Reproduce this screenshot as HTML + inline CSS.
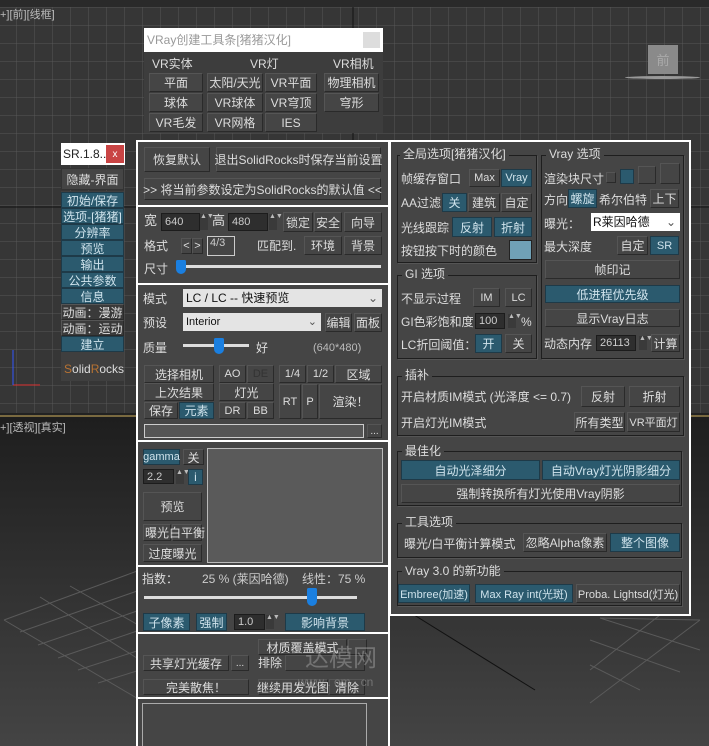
<!DOCTYPE html>
<html><head><meta charset="utf-8"><style>
*{margin:0;padding:0;box-sizing:border-box}
body{width:709px;height:746px;overflow:hidden;position:relative;background:#363636;font-family:"Liberation Sans","Noto Sans CJK SC",sans-serif;font-size:12px;color:#ddd}
div,span{position:absolute}
.b{background:#454545;border:1px solid #2a2a2a;border-top-color:#555;border-left-color:#555;display:flex;align-items:center;justify-content:center;white-space:nowrap;color:#ddd;font-size:12px}
.t{background:#2b5a6e;border:1px solid #1e3a48;display:flex;align-items:center;justify-content:center;white-space:nowrap;color:#cfe3ec;font-size:12px}
.l{white-space:nowrap;font-size:12px;color:#ddd;line-height:14px}
.in{background:#2e2e2e;border:1px solid #1c1c1c;color:#ccc;font-size:11px;padding-left:3px;display:flex;align-items:center}
.g{border:1px solid #1e1e1e;box-shadow:1px 1px 0 #555}
.gt{background:#454545;padding:0 3px;font-size:12px;color:#ddd;line-height:13px;white-space:nowrap}
.wl{background:#fff;height:2px}
.sp{background:#3a3a3a;color:#bbb;font-size:7px;line-height:6px;text-align:center;width:8px}
</style></head><body>
<!-- top viewport grid -->
<svg width="709" height="746" style="position:absolute;left:0;top:0">
<defs><linearGradient id="pg" x1="0" y1="0" x2="0" y2="1"><stop offset="0" stop-color="#1e1e1e"/><stop offset="1" stop-color="#444"/></linearGradient>
<pattern id="gr" x="-2" y="7" width="18" height="18" patternUnits="userSpaceOnUse"><path d="M0 0H18M0 0V18" stroke="#575757" stroke-width="1" fill="none"/></pattern></defs>
<rect x="0" y="0" width="709" height="7" fill="#2a2a2a"/>
<rect x="0" y="7" width="709" height="408" fill="url(#gr)"/>
<line x1="353" y1="7" x2="353" y2="415" stroke="#111" stroke-width="1"/>
<line x1="0" y1="207" x2="709" y2="207" stroke="#111" stroke-width="1"/>
<rect x="0" y="413" width="709" height="2" fill="#222"/>
<rect x="0" y="415" width="709" height="2" fill="#7a6a40"/>
<rect x="0" y="417" width="709" height="329" fill="url(#pg)"/>
<g stroke="#5a5a5a" stroke-width="1" fill="none">
<path d="M4 620 L140 570 M20 632 L140 590 M38 645 L140 610 M58 658 L140 630 M78 670 L140 650 M98 683 L140 670 M4 620 L140 700 M40 597 L140 660 M70 586 L140 626"/>
<path d="M600 618 L700 650 M590 640 L680 672 M590 665 L640 690 M600 618 L700 620 M660 615 L590 670 M700 620 L590 703"/>
<line x1="390" y1="600" x2="535" y2="690" stroke="#111"/>
</g>
<g stroke="#d33" stroke-width="1"><line x1="13" y1="385" x2="40" y2="385"/></g>
<line x1="13" y1="350" x2="13" y2="385" stroke="#35f"/>
</svg>
<div class="l" style="left:0;top:8;color:#bbb;top:8px;font-size:11px">+][前][线框]</div>
<div class="l" style="left:0;top:421px;color:#bbb;font-size:11px">+][透视][真实]</div>
<div style="left:648px;top:45px;width:30px;height:29px;background:#8a8a8a;color:#aaa;font-size:13px;display:flex;align-items:center;justify-content:center">前</div>
<div style="left:625px;top:76px;width:75px;height:3px;border-radius:50%;background:#999"></div>

<!-- VRay toolbar -->
<div style="left:144px;top:28px;width:239px;height:105px;background:#3d3d3d"></div>
<div style="left:144px;top:28px;width:239px;height:24px;background:#fff"></div>
<div class="l" style="left:147px;top:33px;color:#999">VRay创建工具条[猪猪汉化]</div>
<div style="left:363px;top:32px;width:17px;height:16px;background:#ddd"></div>
<div class="l" style="left:152px;top:57px">VR实体</div>
<div class="l" style="left:250px;top:57px">VR灯</div>
<div class="l" style="left:333px;top:57px">VR相机</div>
<div class="b" style="left:149px;top:73px;width:54px;height:19px">平面</div>
<div class="b" style="left:207px;top:73px;width:56px;height:19px">太阳/天光</div>
<div class="b" style="left:265px;top:73px;width:52px;height:19px">VR平面</div>
<div class="b" style="left:324px;top:73px;width:55px;height:19px">物理相机</div>
<div class="b" style="left:149px;top:93px;width:54px;height:19px">球体</div>
<div class="b" style="left:207px;top:93px;width:56px;height:19px">VR球体</div>
<div class="b" style="left:265px;top:93px;width:52px;height:19px">VR穹顶</div>
<div class="b" style="left:324px;top:93px;width:55px;height:19px">穹形</div>
<div class="b" style="left:149px;top:113px;width:54px;height:19px">VR毛发</div>
<div class="b" style="left:207px;top:113px;width:56px;height:19px">VR网格</div>
<div class="b" style="left:265px;top:113px;width:52px;height:19px">IES</div>

<!-- SR small panel -->
<div style="left:61px;top:143px;width:64px;height:22px;background:#fff"></div>
<div class="l" style="left:63px;top:147px;color:#222">SR.1.8...</div>
<div style="left:106px;top:145px;width:18px;height:18px;background:#c94444;color:#fff;font-size:10px;display:flex;align-items:center;justify-content:center">x</div>
<div class="b" style="left:61px;top:168px;width:63px;height:22px;border-color:#333">隐藏-界面</div>
<div style="left:61px;top:191px;width:63px;height:190px;background:#3f3f3f"></div>
<div class="t" style="left:61px;top:192px;width:63px;height:16px">初始/保存</div>
<div class="t" style="left:61px;top:208px;width:63px;height:16px">选项-[猪猪]</div>
<div class="t" style="left:61px;top:224px;width:63px;height:16px">分辨率</div>
<div class="t" style="left:61px;top:240px;width:63px;height:16px">预览</div>
<div class="t" style="left:61px;top:256px;width:63px;height:16px">输出</div>
<div class="t" style="left:61px;top:272px;width:63px;height:16px">公共参数</div>
<div class="t" style="left:61px;top:288px;width:63px;height:16px">信息</div>
<div class="b" style="left:61px;top:304px;width:63px;height:16px;background:#3a3a3a">动画：漫游</div>
<div class="b" style="left:61px;top:320px;width:63px;height:16px;background:#3a3a3a">动画：运动</div>
<div class="t" style="left:61px;top:336px;width:63px;height:16px">建立</div>
<div class="l" style="left:64px;top:362px;color:#ddd"><span style="position:static;color:#b87333">S</span>olid<span style="position:static;color:#b87333">R</span>ocks</div>

<!-- main left panel -->
<div style="left:136px;top:140px;width:254px;height:606px;background:#fff"></div>
<div style="left:138px;top:142px;width:250px;height:604px;background:#454545"></div>
<div class="wl" style="left:138px;top:205px;width:250px"></div>
<div class="wl" style="left:138px;top:283px;width:250px"></div>
<div class="wl" style="left:138px;top:440px;width:250px"></div>
<div class="wl" style="left:138px;top:565px;width:250px"></div>
<div class="wl" style="left:138px;top:632px;width:250px"></div>
<div class="wl" style="left:138px;top:697px;width:250px"></div>

<div class="b" style="left:144px;top:147px;width:66px;height:25px">恢复默认</div>
<div class="b" style="left:216px;top:147px;width:165px;height:25px">退出SolidRocks时保存当前设置</div>
<div class="b" style="left:144px;top:178px;width:237px;height:22px">&gt;&gt; 将当前参数设定为SolidRocks的默认值 &lt;&lt;</div>

<div class="l" style="left:144px;top:214px;font-size:13px">宽</div>
<div class="in" style="left:161px;top:213px;width:39px;height:18px">640</div>
<div class="sp" style="left:200px;top:214px;height:16px">▲▼</div>
<div class="l" style="left:212px;top:214px;font-size:13px">高</div>
<div class="in" style="left:228px;top:213px;width:40px;height:18px">480</div>
<div class="sp" style="left:269px;top:214px;height:16px">▲▼</div>
<div class="b" style="left:283px;top:212px;width:30px;height:20px">锁定</div>
<div class="b" style="left:314px;top:212px;width:28px;height:20px">安全</div>
<div class="b" style="left:344px;top:212px;width:38px;height:20px">向导</div>
<div class="l" style="left:144px;top:239px">格式</div>
<div class="b" style="left:181px;top:238px;width:11px;height:16px;font-size:11px">&lt;</div>
<div class="b" style="left:192px;top:238px;width:11px;height:16px;font-size:11px">&gt;</div>
<div style="left:207px;top:236px;width:28px;height:20px;border:1px solid #ccc;font-size:11px;padding-left:2px;color:#ccc">4/3</div>
<div class="l" style="left:257px;top:239px">匹配到.</div>
<div class="b" style="left:304px;top:236px;width:38px;height:19px">环境</div>
<div class="b" style="left:344px;top:236px;width:38px;height:19px">背景</div>
<div class="l" style="left:144px;top:262px">尺寸</div>
<div style="left:176px;top:265px;width:205px;height:3px;background:#ddd"></div>
<div style="left:176px;top:260px;width:10px;height:14px;background:#1a7fe0;border-radius:2px 2px 6px 6px"></div>

<div class="l" style="left:143px;top:292px">模式</div>
<div style="left:183px;top:289px;width:199px;height:18px;background:#e4e4e4;color:#111;font-size:12px;padding-left:3px;line-height:18px">LC / LC -- 快速预览<span style="right:4px;top:0;color:#555">⌄</span></div>
<div class="l" style="left:143px;top:316px">预设</div>
<div style="left:183px;top:313px;width:138px;height:18px;background:#e4e4e4;color:#111;font-size:11px;padding-left:3px;line-height:18px">Interior<span style="right:4px;top:0;color:#555">⌄</span></div>
<div class="b" style="left:325px;top:313px;width:27px;height:19px">编辑</div>
<div class="b" style="left:354px;top:313px;width:28px;height:19px">面板</div>
<div class="l" style="left:143px;top:341px">质量</div>
<div style="left:183px;top:344px;width:66px;height:3px;background:#ddd"></div>
<div style="left:214px;top:338px;width:10px;height:16px;background:#1a7fe0;border-radius:2px 2px 6px 6px"></div>
<div class="l" style="left:256px;top:341px">好</div>
<div class="l" style="left:313px;top:341px;color:#bbb;font-size:11px">(640*480)</div>

<div class="b" style="left:144px;top:365px;width:70px;height:18px">选择相机</div>
<div class="b" style="left:219px;top:365px;width:27px;height:18px;font-size:11px">AO</div>
<div class="b" style="left:247px;top:365px;width:27px;height:18px;font-size:11px;color:#333">DE</div>
<div class="b" style="left:279px;top:365px;width:27px;height:18px;font-size:11px">1/4</div>
<div class="b" style="left:307px;top:365px;width:27px;height:18px;font-size:11px">1/2</div>
<div class="b" style="left:335px;top:365px;width:47px;height:18px">区域</div>
<div class="b" style="left:144px;top:383px;width:70px;height:18px">上次结果</div>
<div class="b" style="left:219px;top:383px;width:55px;height:18px">灯光</div>
<div class="b" style="left:279px;top:384px;width:22px;height:35px;font-size:11px">RT</div>
<div class="b" style="left:302px;top:384px;width:16px;height:35px;font-size:11px">P</div>
<div class="b" style="left:319px;top:384px;width:63px;height:35px">渲染！</div>
<div class="b" style="left:144px;top:402px;width:34px;height:17px">保存</div>
<div class="t" style="left:179px;top:402px;width:35px;height:17px">元素</div>
<div class="b" style="left:219px;top:402px;width:27px;height:17px;font-size:11px">DR</div>
<div class="b" style="left:247px;top:402px;width:27px;height:17px;font-size:11px">BB</div>
<div style="left:144px;top:424px;width:220px;height:14px;background:#555;border:1px solid #ccc"></div>
<div class="b" style="left:367px;top:424px;width:15px;height:14px;font-size:10px">...</div>

<div class="t" style="left:143px;top:449px;width:37px;height:16px;font-size:11px">gamma</div>
<div class="b" style="left:183px;top:449px;width:21px;height:16px">关</div>
<div class="in" style="left:143px;top:469px;width:31px;height:15px">2.2</div>
<div class="sp" style="left:176px;top:470px;height:14px">▲▼</div>
<div class="t" style="left:188px;top:469px;width:15px;height:16px">i</div>
<div style="left:207px;top:448px;width:176px;height:115px;background:#5a5a5a;border:1px solid #bbb"></div>
<div class="b" style="left:143px;top:492px;width:59px;height:29px">预览</div>
<div class="b" style="left:143px;top:524px;width:28px;height:17px">曝光</div>
<div class="b" style="left:172px;top:524px;width:30px;height:17px">白平衡</div>
<div class="b" style="left:143px;top:544px;width:59px;height:18px">过度曝光</div>

<div class="l" style="left:142px;top:572px">指数：</div>
<div class="l" style="left:202px;top:572px;color:#ccc">25 % (莱因哈德)</div>
<div class="l" style="left:302px;top:572px;color:#ccc">线性：75 %</div>
<div style="left:144px;top:596px;width:213px;height:3px;background:#ddd"></div>
<div style="left:307px;top:588px;width:10px;height:18px;background:#1a7fe0;border-radius:2px 2px 6px 6px"></div>
<div class="t" style="left:143px;top:613px;width:47px;height:18px">子像素</div>
<div class="t" style="left:196px;top:613px;width:31px;height:18px">强制</div>
<div class="in" style="left:234px;top:614px;width:31px;height:16px">1.0</div>
<div class="sp" style="left:266px;top:615px;height:14px">▲▼</div>
<div class="t" style="left:285px;top:613px;width:80px;height:18px">影响背景</div>

<div class="b" style="left:258px;top:639px;width:89px;height:16px">材质覆盖模式</div>
<div class="b" style="left:348px;top:639px;width:19px;height:16px"></div>
<div class="b" style="left:143px;top:655px;width:86px;height:16px">共享灯光缓存</div>
<div class="b" style="left:231px;top:655px;width:18px;height:16px;font-size:10px">...</div>
<div class="l" style="left:258px;top:656px">排除</div>
<div class="b" style="left:285px;top:655px;width:80px;height:16px"></div>
<div class="b" style="left:143px;top:679px;width:106px;height:16px">完美散焦！</div>
<div class="b" style="left:258px;top:679px;width:70px;height:16px">继续用发光图</div>
<div class="b" style="left:329px;top:679px;width:36px;height:16px">清除</div>
<div class="l" style="left:305px;top:646px;font-size:24px;color:rgba(200,200,200,.35);line-height:26px">达模网</div>
<div class="l" style="left:298px;top:675px;font-size:12px;color:rgba(200,200,200,.35)">www . om . cn</div>
<div style="left:142px;top:703px;width:225px;height:43px;border:1px solid #aaa;border-bottom:none"></div>

<!-- right panel -->
<div style="left:389px;top:140px;width:302px;height:476px;background:#fff"></div>
<div style="left:391px;top:142px;width:298px;height:472px;background:#454545"></div>

<div class="g" style="left:397px;top:155px;width:140px;height:108px"></div>
<div class="gt" style="left:400px;top:148px">全局选项[猪猪汉化]</div>
<div class="l" style="left:401px;top:172px">帧缓存窗口</div>
<div class="b" style="left:469px;top:169px;width:31px;height:18px;font-size:11px">Max</div>
<div class="t" style="left:501px;top:169px;width:31px;height:18px;font-size:11px">Vray</div>
<div class="l" style="left:401px;top:196px">AA过滤</div>
<div class="t" style="left:442px;top:193px;width:25px;height:19px">关</div>
<div class="b" style="left:468px;top:193px;width:32px;height:19px">建筑</div>
<div class="b" style="left:501px;top:193px;width:31px;height:19px">自定</div>
<div class="l" style="left:401px;top:221px">光线跟踪</div>
<div class="t" style="left:452px;top:217px;width:40px;height:20px">反射</div>
<div class="t" style="left:494px;top:217px;width:38px;height:20px">折射</div>
<div class="l" style="left:401px;top:244px">按钮按下时的颜色</div>
<div style="left:509px;top:240px;width:23px;height:20px;background:#70a1b6;border:1px solid #222"></div>

<div class="g" style="left:397px;top:275px;width:140px;height:84px"></div>
<div class="gt" style="left:402px;top:268px">GI 选项</div>
<div class="l" style="left:401px;top:292px">不显示过程</div>
<div class="b" style="left:473px;top:288px;width:27px;height:19px;font-size:11px">IM</div>
<div class="b" style="left:505px;top:288px;width:27px;height:19px;font-size:11px">LC</div>
<div class="l" style="left:401px;top:315px">GI色彩饱和度</div>
<div class="in" style="left:475px;top:313px;width:30px;height:16px">100</div>
<div class="sp" style="left:508px;top:314px;height:14px">▲▼</div>
<div class="l" style="left:521px;top:315px">%</div>
<div class="l" style="left:401px;top:338px">LC折回阈值：</div>
<div class="t" style="left:475px;top:334px;width:27px;height:19px">开</div>
<div class="b" style="left:505px;top:334px;width:27px;height:19px">关</div>

<div class="g" style="left:541px;top:155px;width:143px;height:204px"></div>
<div class="gt" style="left:546px;top:148px">Vray 选项</div>
<div class="l" style="left:544px;top:172px">渲染块尺寸</div>
<div class="b" style="left:606px;top:172px;width:10px;height:11px"></div>
<div class="t" style="left:620px;top:169px;width:14px;height:15px"></div>
<div class="b" style="left:638px;top:166px;width:18px;height:18px"></div>
<div class="b" style="left:660px;top:163px;width:20px;height:21px"></div>
<div class="l" style="left:544px;top:193px">方向</div>
<div class="t" style="left:568px;top:189px;width:29px;height:19px">螺旋</div>
<div class="l" style="left:599px;top:193px">希尔伯特</div>
<div class="b" style="left:650px;top:189px;width:29px;height:19px">上下</div>
<div class="l" style="left:544px;top:217px">曝光：</div>
<div style="left:591px;top:213px;width:89px;height:18px;background:#fff;color:#111;padding-left:2px;line-height:18px;font-size:12px">R莱因哈德<span style="right:4px;top:0;color:#555">⌄</span></div>
<div class="l" style="left:544px;top:240px">最大深度</div>
<div class="b" style="left:617px;top:236px;width:31px;height:19px">自定</div>
<div class="t" style="left:650px;top:236px;width:29px;height:19px;font-size:11px">SR</div>
<div class="b" style="left:545px;top:260px;width:135px;height:19px">帧印记</div>
<div class="t" style="left:545px;top:285px;width:135px;height:18px">低进程优先级</div>
<div class="b" style="left:545px;top:309px;width:135px;height:18px">显示Vray日志</div>
<div class="l" style="left:544px;top:337px">动态内存</div>
<div class="in" style="left:596px;top:335px;width:40px;height:16px">26113</div>
<div class="sp" style="left:639px;top:336px;height:14px">▲▼</div>
<div class="b" style="left:651px;top:334px;width:29px;height:18px">计算</div>

<div class="g" style="left:397px;top:376px;width:287px;height:60px"></div>
<div class="gt" style="left:402px;top:369px">插补</div>
<div class="l" style="left:401px;top:390px">开启材质IM模式 (光泽度 &lt;= 0.7)</div>
<div class="b" style="left:581px;top:386px;width:44px;height:21px">反射</div>
<div class="b" style="left:629px;top:386px;width:51px;height:21px">折射</div>
<div class="l" style="left:401px;top:416px">开启灯光IM模式</div>
<div class="b" style="left:574px;top:412px;width:51px;height:20px">所有类型</div>
<div class="b" style="left:627px;top:412px;width:53px;height:20px;font-size:11px">VR平面灯</div>

<div class="g" style="left:397px;top:451px;width:285px;height:55px"></div>
<div class="gt" style="left:402px;top:445px">最佳化</div>
<div class="t" style="left:401px;top:460px;width:139px;height:20px">自动光泽细分</div>
<div class="t" style="left:542px;top:460px;width:138px;height:20px">自动Vray灯光阴影细分</div>
<div class="b" style="left:401px;top:484px;width:279px;height:19px">强制转换所有灯光使用Vray阴影</div>

<div class="g" style="left:397px;top:523px;width:285px;height:35px"></div>
<div class="gt" style="left:402px;top:516px">工具选项</div>
<div class="l" style="left:404px;top:537px">曝光/白平衡计算模式</div>
<div class="b" style="left:523px;top:533px;width:84px;height:19px">忽略Alpha像素</div>
<div class="t" style="left:610px;top:533px;width:70px;height:19px">整个图像</div>

<div class="g" style="left:397px;top:571px;width:285px;height:35px"></div>
<div class="gt" style="left:402px;top:565px">Vray 3.0 的新功能</div>
<div class="t" style="left:398px;top:584px;width:72px;height:19px;font-size:11px">Embree(加速)</div>
<div class="t" style="left:475px;top:584px;width:98px;height:19px;font-size:11px">Max Ray int(光斑)</div>
<div class="b" style="left:576px;top:584px;width:104px;height:19px;font-size:11px">Proba. Lightsd(灯光)</div>
</body></html>
